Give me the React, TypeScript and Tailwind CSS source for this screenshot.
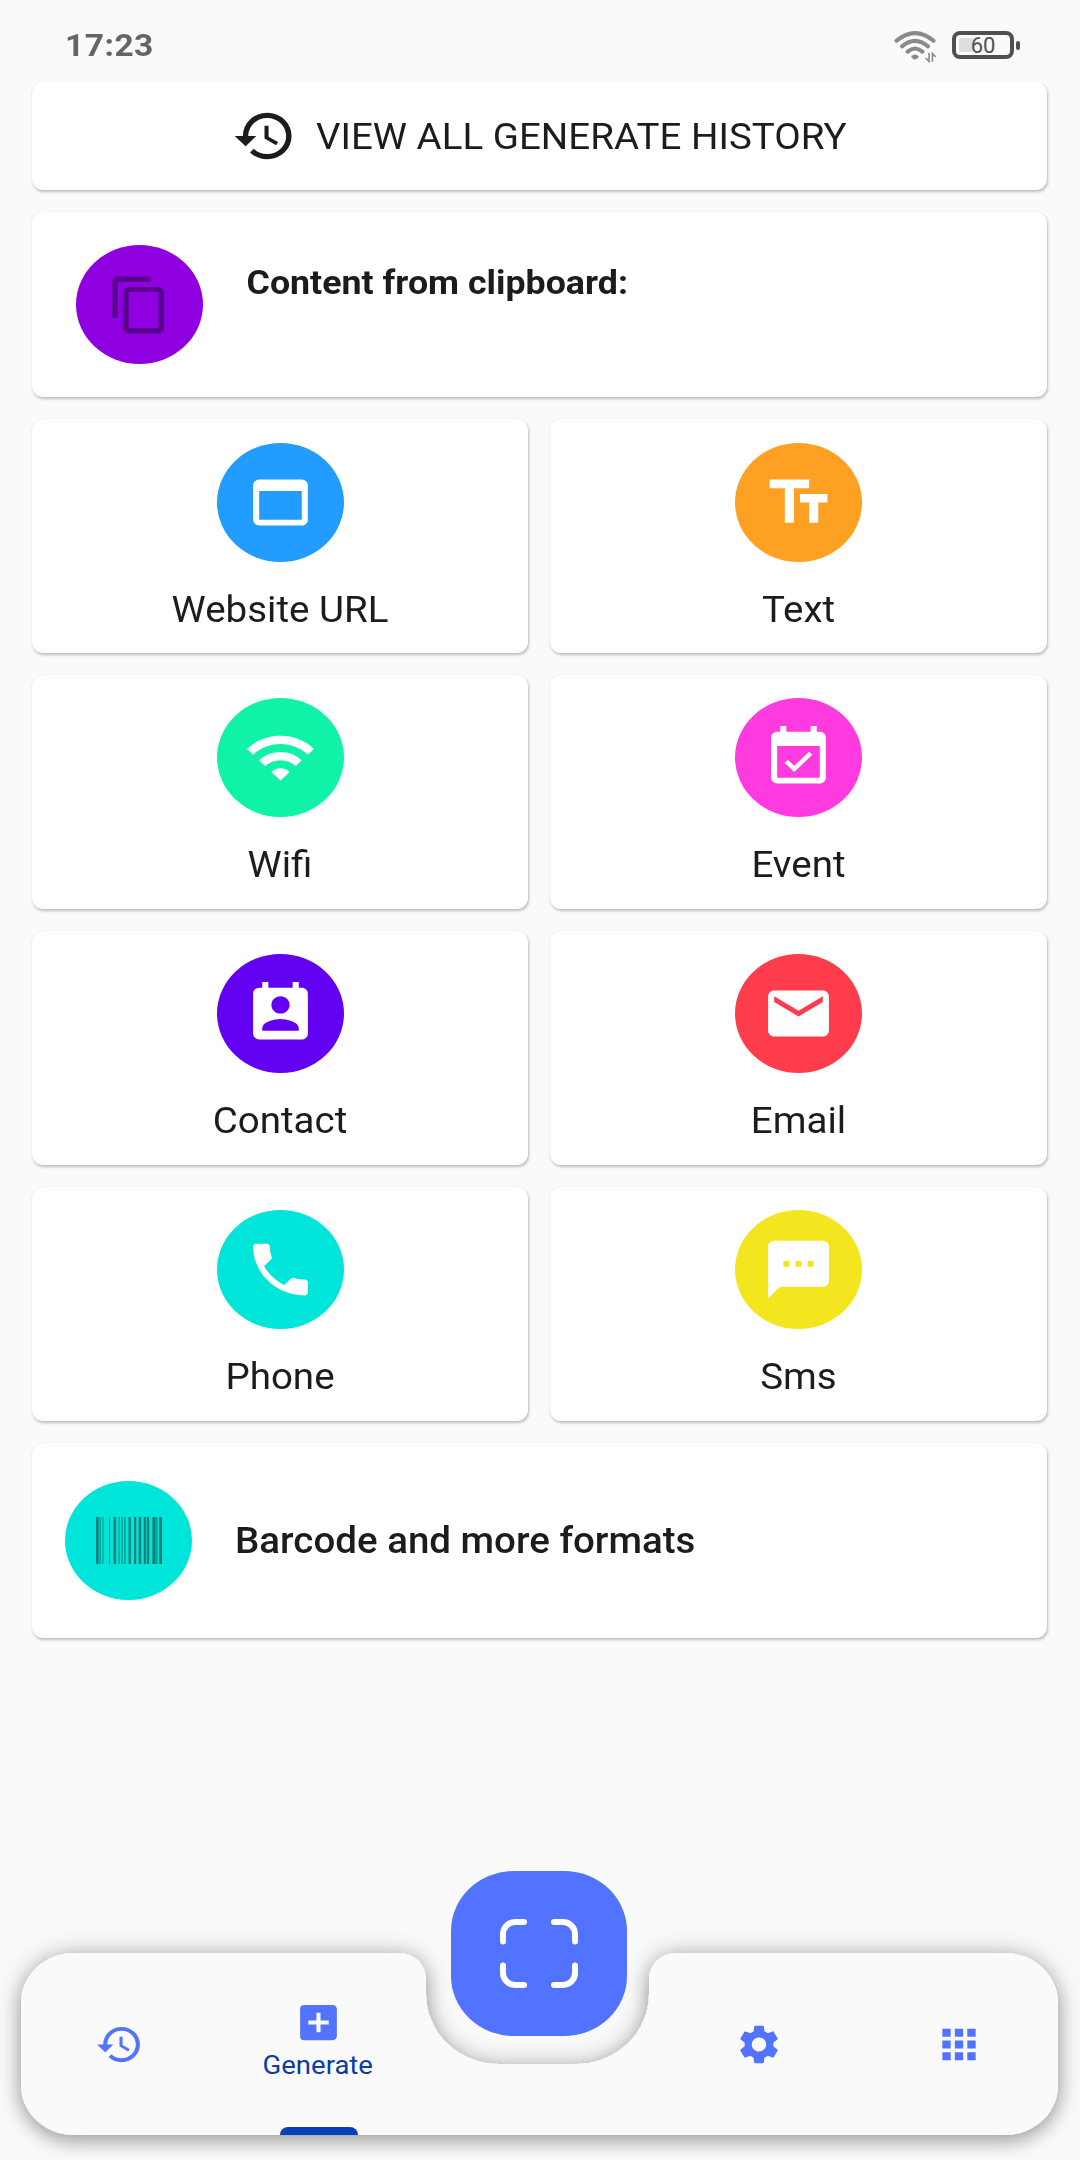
import type { ReactNode } from "react";
import type { IconType } from "react-icons";
import {
  MdAddBox,
  MdApps,
  MdContentCopy,
  MdEmail,
  MdEventAvailable,
  MdHistory,
  MdPermContactCalendar,
  MdPhone,
  MdSettings,
  MdSms,
  MdTextFields,
  MdWebAsset,
  MdWifi,
} from "react-icons/md";

const tiles: { label: string; color: string; icon: IconType }[] = [
  { label: "Website URL", color: "bg-[#229cff]", icon: MdWebAsset },
  { label: "Text", color: "bg-[#fea123]", icon: MdTextFields },
  { label: "Wifi", color: "bg-[#11f2a9]", icon: MdWifi },
  { label: "Event", color: "bg-[#ff3adf]", icon: MdEventAvailable },
  { label: "Contact", color: "bg-[#6200f2]", icon: MdPermContactCalendar },
  { label: "Email", color: "bg-[#ff3c4b]", icon: MdEmail },
  { label: "Phone", color: "bg-[#00e5d9]", icon: MdPhone },
  { label: "Sms", color: "bg-[#f3e61e]", icon: MdSms },
];

// [x, width] of each bar inside a 66-unit wide code
const bars: [number, number][] = [
  [0, 2.6], [3.6, 1], [6.6, 0.8], [13, 1], [17.5, 2.6], [22.6, 1], [25.6, 1], [28.4, 1],
  [32.6, 2.2], [38, 2.2], [42.6, 2.6], [47.8, 2], [50.8, 2.4], [56.4, 3.2], [60.4, 1], [63.2, 2.8],
];

const cardBase = "rounded-[11px] bg-white shadow-[0_0_1px_rgba(0,0,0,0.12),1px_2px_3px_rgba(0,0,0,0.24)]";

function Badge({ color, children }: { color: string; children: ReactNode }) {
  return (
    <div className={`flex h-[119px] w-[127px] shrink-0 items-center justify-center rounded-[50%] ${color}`}>
      {children}
    </div>
  );
}

function StatusBar() {
  return (
    <header className="flex h-[82px] items-start justify-between pl-[65px] pr-[60px]">
      <span className="mt-[25px] inline-block scale-y-[0.96] text-[33.5px] font-bold leading-[40px] tracking-[0.5px] text-[#646464]">
        17:23
      </span>
      <div className="mt-[31px] flex items-start">
        <svg className="h-[32px] w-[43px]" viewBox="0 0 43 32" fill="none">
          <g stroke="#8a8a8a" strokeWidth="4" strokeLinecap="round">
            <path d="M2.5 9.8Q21 -5.6 39.5 9.8" />
            <path d="M8 15.4Q21 4.4 34 15.4" />
            <path d="M13.6 20.6Q21 14.4 28.4 20.6" />
          </g>
          <path d="M17 25.4Q21 21.4 25 25.4Q23 28.6 21 28.6T17 25.4Z" fill="#8a8a8a" />
          <path d="M35 22V30.5L31.8 27M38.4 31V22.5L41.8 26" stroke="#8a8a8a" strokeWidth="1.6" />
        </svg>
        <div className="ml-[15px] flex items-center">
          <div className="relative flex h-[28px] w-[62px] items-center justify-center rounded-[8px] border-4 border-[#505050] bg-[#fafafa]">
            <div className="absolute left-[3px] top-[3px] h-[14px] w-[14px] rounded-[2px] bg-[#dedede]" />
            <span className="relative mt-[2px] text-[22px] leading-[20px] text-[#505050]">60</span>
          </div>
          <div className="ml-[2px] h-[9px] w-[4px] rounded-[2px] bg-[#505050]" />
        </div>
      </div>
    </header>
  );
}

function NavItem({ children }: { children: ReactNode }) {
  return <div className="relative flex h-full w-[199px] flex-col items-center">{children}</div>;
}

function BottomNav() {
  return (
    <nav className="relative mx-[21px] mb-[25px] mt-auto h-[182px]">
      <svg className="absolute left-0 top-0 h-[182px] w-[1037px] overflow-visible" viewBox="0 0 1037 182">
        <defs>
          <filter id="barShadow" x="-10%" y="-40%" width="120%" height="180%">
            <feDropShadow dx="0" dy="1" stdDeviation="12" floodColor="#000" floodOpacity="0.3" result="ambient" />
            <feDropShadow in="SourceGraphic" dx="0" dy="8" stdDeviation="9" floodColor="#000" floodOpacity="0.18" result="key" />
            <feMerge>
              <feMergeNode in="ambient" />
              <feMergeNode in="key" />
            </feMerge>
          </filter>
        </defs>
        <path
          filter="url(#barShadow)"
          fill="#fafafa"
          d="M53 0H378A27 26 0 0 1 405 26V41A73 70 0 0 0 478 111H555A73 70 0 0 0 628 41V26A27 26 0 0 1 655 0H984A53 50 0 0 1 1037 50V132A53 50 0 0 1 984 182H53A53 50 0 0 1 0 132V50A53 50 0 0 1 53 0Z"
        />
      </svg>

      <div className="relative -ml-px mr-px flex h-full justify-between text-[#5273ff]">
        <NavItem>
          <MdHistory preserveAspectRatio="none" className="mt-[68px] h-[47px] w-[49px]" />
        </NavItem>
        <NavItem>
          <MdAddBox preserveAspectRatio="none" className="mt-[46px] h-[47px] w-[49px]" />
          <span className="mt-[3px] inline-block -translate-x-px scale-y-[0.945] text-[27.5px] leading-[32px] text-[#0b3ca8]">
            Generate
          </span>
          <div className="mt-auto h-[8px] w-[78px] rounded-t-[8px] bg-[#0540b8]" />
        </NavItem>
        <div className="w-[241px]" />
        <NavItem>
          <MdSettings preserveAspectRatio="none" className="mt-[68px] h-[47px] w-[48px]" />
        </NavItem>
        <NavItem>
          <MdApps preserveAspectRatio="none" className="mt-[68px] h-[47px] w-[50px]" />
        </NavItem>
      </div>

      <button className="absolute left-[430px] top-[-82px] flex h-[165px] w-[176px] items-center justify-center rounded-[63px/60px] bg-[#5273ff]">
        <svg className="h-[69px] w-[78px]" viewBox="0 0 78 69" fill="none" stroke="#fff" strokeWidth="6" strokeLinecap="round">
          <path d="M3 22.5V15A12 12 0 0 1 15 3H24M54 3H63A12 12 0 0 1 75 15V22.5M75 46.5V54A12 12 0 0 1 63 66H54M24 66H15A12 12 0 0 1 3 54V46.5" />
        </svg>
      </button>
    </nav>
  );
}

export default function App() {
  return (
    <div className="flex h-[2160px] w-[1080px] flex-col overflow-hidden bg-[#fafafa] font-['Roboto',sans-serif] text-[#1c1c1c]">
      <StatusBar />

      <main className="flex flex-col gap-[22px] pl-[32px] pr-[33px]">
        <button className={`flex h-[108px] items-center pl-[200px] ${cardBase}`}>
          <MdHistory preserveAspectRatio="none" className="h-[62px] w-[65px]" />
          <span className="ml-[19px] mt-[2px] inline-block scale-y-[0.955] whitespace-nowrap text-[38.5px] leading-[44px]">
            VIEW ALL GENERATE HISTORY
          </span>
        </button>

        <section className={`flex h-[185px] items-start pl-[44px] pt-[33px] ${cardBase}`}>
          <Badge color="bg-[#8f00e0]">
            <MdContentCopy preserveAspectRatio="none" className="h-[62px] w-[65px] text-[#59008d]" />
          </Badge>
          <h2 className="ml-[43.5px] mt-[17px] inline-block scale-y-[0.945] whitespace-nowrap text-[35.75px] font-bold leading-[42px]">
            Content from clipboard:
          </h2>
        </section>

        <div className="grid grid-cols-[496px_497px] justify-between gap-y-[22px]">
          {tiles.map(({ label, color, icon: Icon }, i) => (
            <button
              key={label}
              className={`flex h-[234px] flex-col items-center ${i < 2 ? "pt-[24px]" : "pt-[23px]"} ${cardBase}`}
            >
              <Badge color={color}>
                <Icon preserveAspectRatio="none" className="h-[69px] w-[73px] text-white" />
              </Badge>
              <span className="mt-[26px] inline-block scale-y-[0.955] text-[38.5px] leading-[44px]">{label}</span>
            </button>
          ))}
        </div>

        <section className={`flex h-[195px] items-center pl-[33px] ${cardBase}`}>
          <Badge color="bg-[#00e5d9]">
            <svg className="h-[47px] w-[66px]" viewBox="0 0 66 47" fill="#067f78">
              {bars.map(([x, w]) => (
                <rect key={x} x={x} width={w} height="47" />
              ))}
            </svg>
          </Badge>
          <h2 className="ml-[43px] mt-[1px] inline-block scale-y-[0.955] whitespace-nowrap text-[38.5px] font-medium leading-[44px]">
            Barcode and more formats
          </h2>
        </section>
      </main>

      <BottomNav />
    </div>
  );
}
